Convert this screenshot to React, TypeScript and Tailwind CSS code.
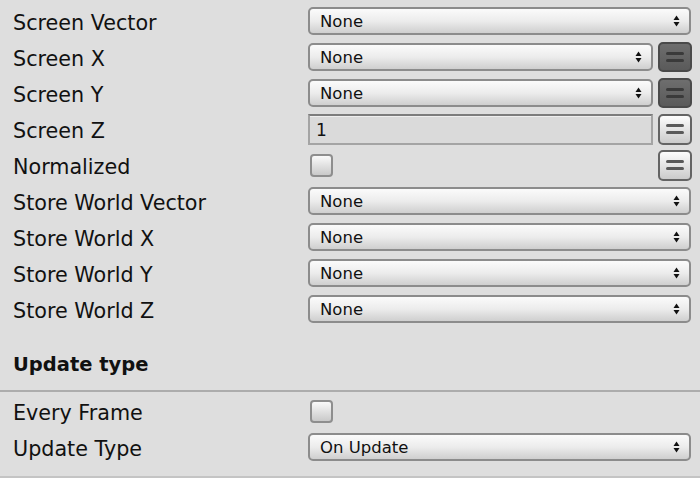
import React from "react";

type Field = {
  label: string;
  kind: "popup" | "text" | "check";
  value?: string;
  toggle?: "dark" | "light";
};

const fields: Field[] = [
  { label: "Screen Vector", kind: "popup", value: "None" },
  { label: "Screen X", kind: "popup", value: "None", toggle: "dark" },
  { label: "Screen Y", kind: "popup", value: "None", toggle: "dark" },
  { label: "Screen Z", kind: "text", value: "1", toggle: "light" },
  { label: "Normalized", kind: "check", toggle: "light" },
  { label: "Store World Vector", kind: "popup", value: "None" },
  { label: "Store World X", kind: "popup", value: "None" },
  { label: "Store World Y", kind: "popup", value: "None" },
  { label: "Store World Z", kind: "popup", value: "None" },
];

const font = "font-['DejaVu_Sans','Liberation_Sans',sans-serif]";

const Arrows: React.FC = () => (
  <svg width="7" height="12" viewBox="0 0 7 12" className="shrink-0">
    <path d="M3.5 0.5 L6.5 5 L0.5 5 Z" fill="#111" />
    <path d="M3.5 11.5 L6.5 7 L0.5 7 Z" fill="#111" />
  </svg>
);

const Popup: React.FC<{ value: string }> = ({ value }) => (
  <div className="flex h-[28px] flex-1 items-center justify-between rounded-[5px] border-2 border-[#8c8c8c] bg-gradient-to-b from-[#fbfbfb] via-[#ececec] to-[#cfcfcf] pl-[10px] pr-[9px]">
    <span className="mt-[2px] block text-[16.5px] leading-[20px] text-[#111]">{value}</span>
    <Arrows />
  </div>
);

const TextField: React.FC<{ value: string }> = ({ value }) => (
  <div className="flex h-[31px] flex-1 items-center border-2 border-[#a4a4a4] border-t-[#7c7c7c] bg-[#dadada] pl-[6px] shadow-[inset_0_1px_0_#eeeeee]">
    <span className="mt-[1px] block text-[17px] leading-[20px] text-[#111]">{value}</span>
  </div>
);

const Check: React.FC = () => (
  <div className="ml-[2px] h-[23px] w-[23px] rounded-[4px] border-2 border-[#8e8e8e] bg-gradient-to-b from-[#fafafa] to-[#c9c9c9]" />
);

const Toggle: React.FC<{ dark: boolean }> = ({ dark }) => (
  <div
    className={
      dark
        ? "ml-[5px] flex h-[30px] w-[34px] shrink-0 flex-col items-center justify-center gap-[4px] rounded-[5px] border-2 border-[#4a4a4a] bg-gradient-to-b from-[#6e6e6e] to-[#5a5a5a]"
        : "ml-[5px] flex h-[31px] w-[34px] shrink-0 flex-col items-center justify-center gap-[4px] rounded-[5px] border-2 border-[#646464] bg-gradient-to-b from-[#fdfdfd] to-[#cbcbcb]"
    }
  >
    <div className={dark ? "h-[3px] w-[18px] rounded-full bg-[#3a3a3a]" : "h-[3px] w-[18px] rounded-full bg-[#5a5a5a]"} />
    <div className={dark ? "h-[3px] w-[18px] rounded-full bg-[#3a3a3a]" : "h-[3px] w-[18px] rounded-full bg-[#5a5a5a]"} />
  </div>
);

const Label: React.FC<{ text: string }> = ({ text }) => (
  <div className="h-[28px] w-[308px] shrink-0 pl-[13px] pt-[4px] text-[20.7px] leading-[24px] text-[#111]">{text}</div>
);

const Row: React.FC<{ field: Field }> = ({ field }) => (
  <div className={`flex h-[28px] items-center ${field.toggle ? "pr-[8px]" : "pr-[9px]"}`}>
    <Label text={field.label} />
    <div className="flex flex-1 items-center">
      {field.kind === "popup" && <Popup value={field.value ?? ""} />}
      {field.kind === "text" && <TextField value={field.value ?? ""} />}
      {field.kind === "check" && (
        <div className="flex-1">
          <Check />
        </div>
      )}
      {field.toggle && <Toggle dark={field.toggle === "dark"} />}
    </div>
  </div>
);

export default function App() {
  return (
    <div className={`h-[478px] w-[700px] overflow-hidden bg-[#dedede] ${font}`}>
      <div className="flex flex-col gap-[8px] pt-[7px]">
        {fields.map((f) => (
          <Row key={f.label} field={f} />
        ))}
      </div>

      <div className="flex h-[67px] items-end pb-[15px] pl-[13px]">
        <span className="text-[19.5px] font-bold leading-[20px] text-[#111]">Update type</span>
      </div>
      <div className="h-[2px] bg-[#acacac]" />

      <div className="flex flex-col gap-[8px] pt-[5px]">
        <div className="flex h-[28px] items-center pr-[9px]">
          <Label text="Every Frame" />
          <Check />
        </div>
        <div className="flex h-[28px] items-center pr-[9px]">
          <Label text="Update Type" />
          <Popup value="On Update" />
        </div>
      </div>
      <div className="mt-[15px] h-[2px] bg-[#c4c4c4]" />
    </div>
  );
}
